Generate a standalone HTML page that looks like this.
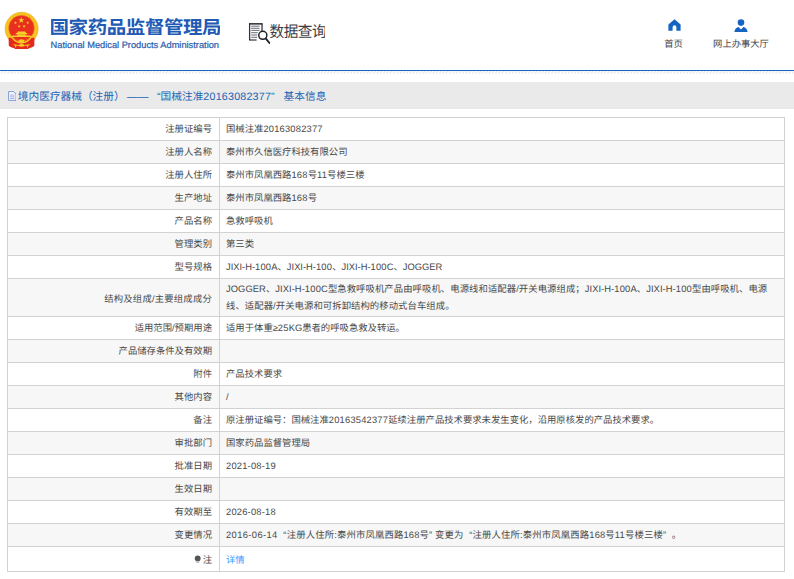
<!DOCTYPE html>
<html lang="zh-CN">
<head>
<meta charset="utf-8">
<title>国家药品监督管理局 数据查询</title>
<style>
html,body{margin:0;padding:0;}
body{text-rendering:geometricPrecision;width:794px;height:579px;overflow:hidden;background:#fff;position:relative;font-family:"Liberation Sans","Noto Sans CJK SC",sans-serif;color:#484848;font-size:9.35px;}
.abs{position:absolute;}
#emblem{left:4px;top:11px;width:36px;height:39px;}
#logotxt{left:50.8px;top:17.9px;width:168.8px;height:17.2px;}
#logoen{left:50.6px;top:38.7px;font-size:9.28px;line-height:12px;color:#2a5eae;-webkit-text-stroke:.22px #2a5eae;white-space:nowrap;transform-origin:0 0;}
#sjicon{left:248px;top:23px;width:22px;height:21px;}
#sjtxt{left:270px;top:23.6px;width:55.4px;height:14.7px;}
.nav{font-size:9.3px;line-height:12px;color:#444;white-space:nowrap;text-align:center;}
#nav1{left:643.6px;width:60px;top:38.1px;}
#nav2{left:701px;width:80px;top:38.1px;}
#ic1{left:667.5px;top:19px;width:13px;height:12px;}
#ic2{left:734px;top:18.8px;width:14px;height:13.6px;}
#blue{left:0;top:69.8px;width:794px;height:1.5px;background:#1766c2;}
#hatch{left:0;top:71.4px;width:794px;height:2.8px;}
#band{left:0;top:82px;width:794px;height:27px;background:#eaeaea;}
#docic{left:7.8px;top:90.8px;width:8.6px;height:10px;}
#title{left:17.8px;top:89.5px;font-size:10.7px;line-height:14px;color:#2163b5;white-space:nowrap;}
table{position:absolute;left:7px;top:116.7px;width:778px;border-collapse:collapse;table-layout:fixed;font-size:9.35px;color:#484848;}
th,td{border:1px solid #d2d2d2;height:21.41px;padding:.6px 7px 0;box-sizing:content-box;line-height:16px;font-weight:normal;vertical-align:middle;white-space:nowrap;overflow:hidden;}
th{width:197px;text-align:right;padding-right:7px;}
td{text-align:left;padding-left:6px;}
tr.alt th,tr.alt td{background:#f7f7f7;}
tr.tall th,tr.tall td{height:36.41px;}
tr.tall th{height:33.01px;padding-top:4px;letter-spacing:.2px;}
tr.tall td{line-height:17.2px;height:35.21px;padding-top:1.8px;letter-spacing:.07px;}
tr.last th,tr.last td{height:24.9px;padding-top:2.2px;padding-bottom:0;box-sizing:border-box;}
.lnk{color:#3b9bff;}
.dt{letter-spacing:.39px;}
.d{letter-spacing:.2px;}
.q{margin-left:2.9px;}
.ls{letter-spacing:.16px;}
.bulb{width:7.4px;height:8.9px;vertical-align:-.7px;margin-right:1.4px;}
</style>
</head>
<body>
<svg id="emblem" class="abs" viewBox="4 11 36 39" role="img"><title>国徽</title>
<circle cx="21.6" cy="28.8" r="16.5" fill="#f6c41e" stroke="#f0ae1c" stroke-width=".7"/>
<path d="M8.6 37.8L8.8 45.6Q9.2 47 13.6 48L15.4 48.9H27.9L29.7 48Q33.9 47 34.3 45.6L34.5 37.8Z" fill="#e32a1c"/>
<circle cx="21.5" cy="28.1" r="12.9" fill="#e9301f" stroke="#ef9a1c" stroke-width=".6"/>
<path d="M11.3 36.6Q15 42.4 21.5 42.9Q28 42.4 31.7 36.6" fill="none" stroke="#f8cb22" stroke-width="1.2"/>
<path d="M21.30 17.00L22.05 19.16L24.34 19.21L22.52 20.60L23.18 22.79L21.30 21.48L19.42 22.79L20.08 20.60L18.26 19.21L20.55 19.16ZM15.40 21.25L15.81 22.23L16.87 22.32L16.07 23.02L16.31 24.05L15.40 23.50L14.49 24.05L14.73 23.02L13.93 22.32L14.99 22.23ZM27.70 21.25L28.11 22.23L29.17 22.32L28.37 23.02L28.61 24.05L27.70 23.50L26.79 24.05L27.03 23.02L26.23 22.32L27.29 22.23ZM19.10 24.65L19.51 25.63L20.57 25.72L19.77 26.42L20.01 27.45L19.10 26.90L18.19 27.45L18.43 26.42L17.63 25.72L18.69 25.63ZM24.10 24.65L24.51 25.63L25.57 25.72L24.77 26.42L25.01 27.45L24.10 26.90L23.19 27.45L23.43 26.42L22.63 25.72L23.69 25.63Z" fill="#f8d22c"/>
<path d="M17.6 31.4h7.8l.5 1.5h-8.8zM16 33.1h11l.5 1.2H15.5zM17.3 34.4h8.4v1H17.3zM12.6 35.4h17.8l.8 1.7H11.8z" fill="#f8cf2a"/>
<ellipse cx="21.5" cy="41.3" rx="2.9" ry="2.1" fill="#f8cb22"/>
<ellipse cx="21.6" cy="45.4" rx="2.7" ry="1.35" fill="#f8cb22"/>
<path d="M13.6 44.7L19 45.5M29.6 44.7L24.2 45.5" stroke="#f8cb22" stroke-width="1"/>
<path d="M14.6 45L15.6 48L16.6 45.4ZM28.6 45L27.6 48L26.6 45.4Z" fill="#f8cb22"/>
</svg>
<svg id="logotxt" class="abs" viewBox="76 -860 8853 951" preserveAspectRatio="none" role="img"><title>国家药品监督管理局</title><text x="0" y="0" font-size="1000" font-weight="bold" fill="#215ab4" font-family="'Liberation Sans','Noto Sans CJK SC',sans-serif">国家药品监督管理局</text></svg>
<div id="logoen" class="abs">National Medical Products Administration</div>
<svg id="sjicon" class="abs" viewBox="0 0 22 21">
<path d="M1.6 0.1V17" fill="none" stroke="#33333f" stroke-width="1.3"/>
<path d="M1 0.85H14.6" fill="none" stroke="#33333f" stroke-width="1.6"/>
<path d="M14 0.8V8" fill="none" stroke="#33333f" stroke-width="1.3"/>
<path d="M1 17H8.6" fill="none" stroke="#33333f" stroke-width="1.2"/>
<path d="M3.2 3.2h8.4M3.2 5.3h8.4M3.2 7.4h8.4M3.2 9.7h6.5M3.2 12h6M3.2 14.3h6" stroke="#44444e" stroke-width=".8"/>
<circle cx="14.8" cy="12.3" r="4.05" fill="#fff" stroke="#22222e" stroke-width="1.5"/>
<path d="M17.9 15.7l3.5 4.2" stroke="#22222e" stroke-width="1.9" stroke-linecap="round"/>
</svg>
<svg id="sjtxt" class="abs" viewBox="39 -841 3902 924" preserveAspectRatio="none" role="img"><title>数据查询</title><text x="0" y="0" font-size="1000" fill="#3d3d46" font-family="'Liberation Sans','Noto Sans CJK SC',sans-serif">数据查询</text></svg>
<svg id="ic1" class="abs" viewBox="0 0 13 12"><path d="M6.5 0.3L12.6 5.6V11.8H8.4V8.2a1.9 1.9 0 0 0-3.8 0v3.6H0.4V5.6z" fill="#1564c4"/></svg>
<svg id="ic2" class="abs" viewBox="0 0 14 13.6"><circle cx="7" cy="3.6" r="3.3" fill="#1564c4"/><path d="M0.4 13.4c0-3.4 2.2-5 4.2-5.4L7 10.4 9.4 8c2 .4 4.2 2 4.2 5.4z" fill="#1564c4"/></svg>
<div id="nav1" class="abs nav">首页</div>
<div id="nav2" class="abs nav">网上办事大厅</div>
<div id="blue" class="abs"></div>
<svg id="hatch" class="abs" viewBox="0 0 794 2.8"><defs><pattern id="hp" width="3.3" height="2.8" patternUnits="userSpaceOnUse"><path d="M0.4 2.7L2.6 0.1" stroke="#cfcfcf" stroke-width=".8"/></pattern></defs><rect width="794" height="2.8" fill="url(#hp)"/></svg>
<div id="band" class="abs"></div>
<svg id="docic" class="abs" viewBox="0 0 8.6 10"><path d="M0.6 0.6h5l2.4 2.4v6.4H0.6z" fill="#f6f7fc" stroke="#5f7fca" stroke-width=".75"/><path d="M2.1 4.1h4.4M2.1 5.8h4.4M2.1 7.5h4.4" stroke="#7f98d4" stroke-width=".7"/></svg>
<div id="title" class="abs">境内医疗器械（注册）<span style="margin-left:2.4px">——</span> <span style="margin-left:5.6px">“</span>国械注准<span style="letter-spacing:.21px">20163082377</span>”<span style="margin-left:6px"> 基本信息</span></div>
<table>
<tr class=""><th>注册证编号</th><td>国械注准<span class="d">20163082377</span></td></tr>
<tr class="alt"><th>注册人名称</th><td>泰州市久信医疗科技有限公司</td></tr>
<tr class=""><th>注册人住所</th><td>泰州市凤凰西路<span class="d">168</span>号<span class="d">11</span>号楼三楼</td></tr>
<tr class="alt"><th>生产地址</th><td>泰州市凤凰西路<span class="d">168</span>号</td></tr>
<tr class=""><th>产品名称</th><td>急救呼吸机</td></tr>
<tr class="alt"><th>管理类别</th><td>第三类</td></tr>
<tr class=""><th>型号规格</th><td>JIXI-H-<span class="d">100</span>A、JIXI-H-<span class="d">100</span>、JIXI-H-<span class="d">100</span>C、JOGGER</td></tr>
<tr class="alt tall"><th>结构及组成/主要组成成分</th><td>JOGGER、JIXI-H-<span class="d">100</span>C型急救呼吸机产品由呼吸机、电源线和适配器/开关电源组成；JIXI-H-<span class="d">100</span>A、JIXI-H-<span class="d">100</span>型由呼吸机、电源<br>线、适配器/开关电源和可拆卸结构的移动式台车组成。</td></tr>
<tr class=""><th>适用范围/预期用途</th><td>适用于体重≥<span class="d">25</span>KG患者的呼吸急救及转运。</td></tr>
<tr class="alt"><th>产品储存条件及有效期</th><td></td></tr>
<tr class=""><th>附件</th><td>产品技术要求</td></tr>
<tr class="alt"><th>其他内容</th><td>/</td></tr>
<tr class=""><th>备注</th><td>原注册证编号：国械注准<span class="d">20163542377</span>延续注册产品技术要求未发生变化，沿用原核发的产品技术要求。</td></tr>
<tr class="alt"><th>审批部门</th><td>国家药品监督管理局</td></tr>
<tr class=""><th>批准日期</th><td><span class="d">2021-08-19</span></td></tr>
<tr class="alt"><th>生效日期</th><td></td></tr>
<tr class=""><th>有效期至</th><td><span class="d">2026-08-18</span></td></tr>
<tr class="alt"><th>变更情况</th><td><span class="ls"><span class="dt">2016-06-14</span> <span class="q">“</span>注册人住所:泰州市凤凰西路168号” 变更为 <span class="q">“</span>注册人住所:泰州市凤凰西路168号11号楼三楼”<span class="q"> </span>。</span></td></tr>
<tr class="last"><th><svg class="bulb" viewBox="0 0 10 12"><path d="M5 0.6a4 4 0 0 1 4 4c0 1.9-1.3 2.7-1.7 4H2.7C2.3 7.3 1 6.5 1 4.6a4 4 0 0 1 4-4z" fill="#555"/><rect x="3" y="9.2" width="4" height="1.2" fill="#999"/><rect x="3.6" y="10.8" width="2.8" height="0.9" fill="#999"/></svg>注</th><td><a class="lnk">详情</a></td></tr>
</table>
</body>
</html>
